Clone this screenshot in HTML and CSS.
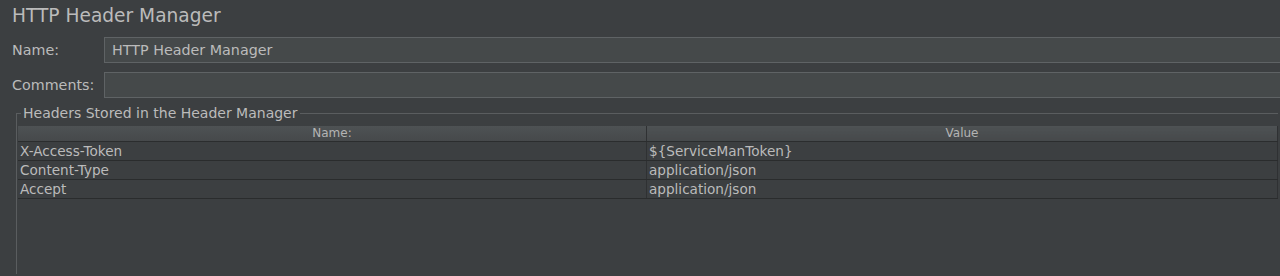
FILE: index.html
```html
<!DOCTYPE html>
<html lang="en">
<head>
  <meta charset="UTF-8" />
  <title>HTTP Header Manager</title>
  <link rel="stylesheet" href="styles.css">
</head>
<body>
  <div class="title">HTTP Header Manager</div>
  <div class="field">
    <label class="field-label">Name:</label>
    <div class="field-input">HTTP Header Manager</div>
  </div>
  <div class="field">
    <label class="field-label">Comments:</label>
    <div class="field-input"></div>
  </div>
  <fieldset class="group">
    <legend class="group-title">Headers Stored in the Header Manager</legend>
    <table class="headers">
      <thead>
        <tr>
          <th class="col-name">Name:</th>
          <th>Value</th>
        </tr>
      </thead>
      <tbody>
        <tr><td>X-Access-Token</td><td>${ServiceManToken}</td></tr>
        <tr><td>Content-Type</td><td>application/json</td></tr>
        <tr><td>Accept</td><td>application/json</td></tr>
      </tbody>
    </table>
  </fieldset>
</body>
</html>
```

FILE: styles.css
```css
body {
  margin: 0;
  background: #3c3f41;
  color: #bbbbbb;
  font-family: 'DejaVu Sans', 'Liberation Sans', sans-serif;
  overflow: hidden;
  height: 276px;
}
.title {
  font-size: 18.6px;
  line-height: 22px;
  padding: 5px 12px 0 12px;
  height: 32px;
}
.field {
  display: flex;
  align-items: center;
  margin-right: -20px;
  margin-bottom: 9px;
}
.field-label {
  width: 92px;
  padding-left: 12px;
  font-size: 14.3px;
}
.field-input {
  flex: 1;
  height: 24px;
  line-height: 24px;
  background: #45494a;
  border: 1px solid #5f6365;
  padding-left: 7px;
  font-size: 14.3px;
}
.group {
  margin: -2px 2px 0 16px;
  padding: 5px 0 0 1px;
  border: 1px solid #5a5d5f;
  border-bottom: none;
  border-right: none;
  height: 163px;
}
.group-title {
  font-size: 14px;
  line-height: 16px;
  padding: 0 2px;
  margin-left: 3px;
}
.headers {
  width: 100%;
  border-collapse: collapse;
  border-right: 1px solid #2f3133;
}
.headers th {
  font-size: 12px;
  font-weight: normal;
  height: 15px;
  line-height: 15px;
  padding: 0;
  background: linear-gradient(#4e5254, #46494b);
  border-right: 1px solid #2f3133;
  border-bottom: 1px solid #2b2d2e;
  color: #b4b4b4;
}
.headers .col-name {
  width: 628px;
}
.headers td {
  font-size: 13.6px;
  height: 18px;
  line-height: 18px;
  padding: 0 2px;
  border-bottom: 1px solid #2a2c2d;
  border-right: 1px solid #2f3133;
}
```
